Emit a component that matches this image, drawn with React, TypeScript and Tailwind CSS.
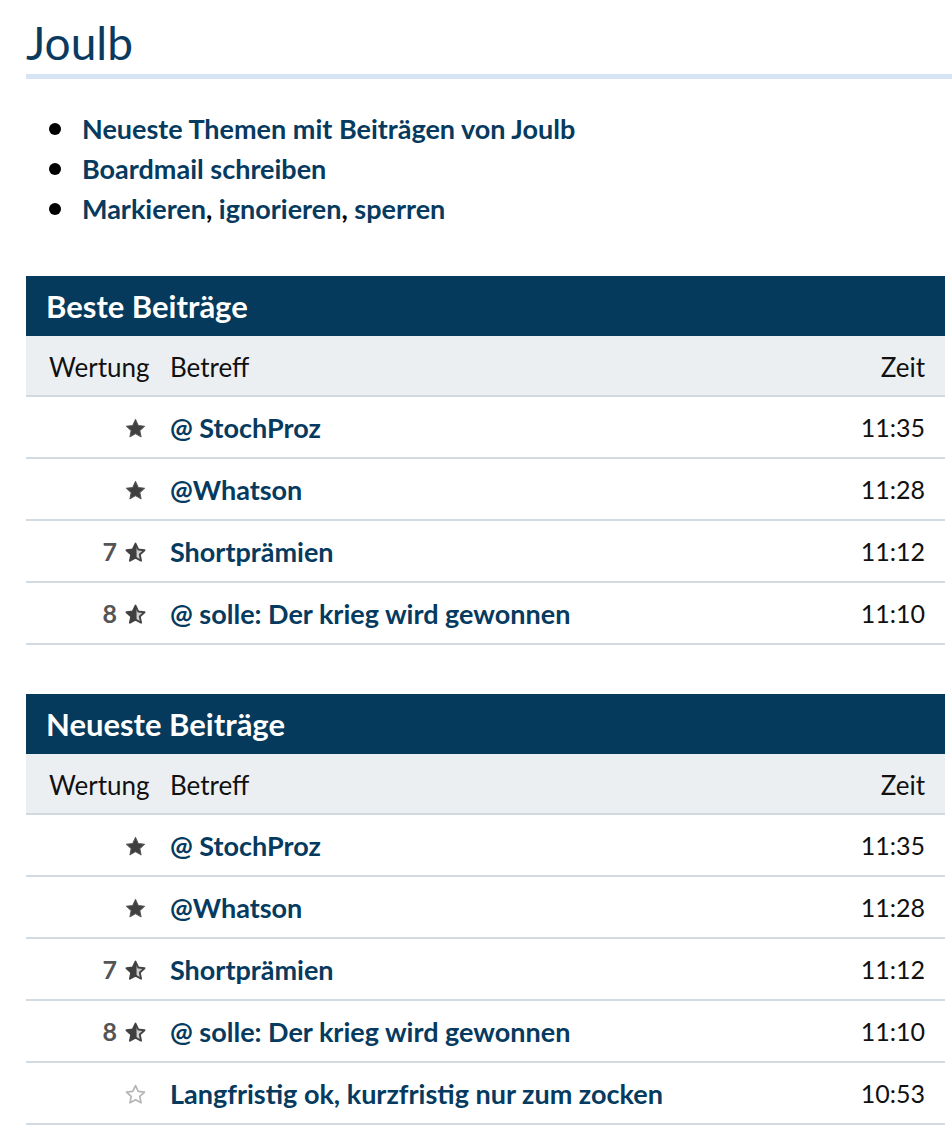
import React from 'react';

type Post = { score?: number; stars: 'full' | 'half' | 'empty'; title: string; time: string };

const best: Post[] = [
  { stars: 'full', title: '@ StochProz', time: '11:35' },
  { stars: 'full', title: '@Whatson', time: '11:28' },
  { score: 7, stars: 'half', title: 'Shortprämien', time: '11:12' },
  { score: 8, stars: 'half', title: '@ solle: Der krieg wird gewonnen', time: '11:10' },
];

const newest: Post[] = [
  ...best,
  { stars: 'empty', title: 'Langfristig ok, kurzfristig nur zum zocken', time: '10:53' },
];

const STAR = 'M10 1.5l2.6 5.6 6 .7-4.5 4.1 1.2 6L10 14.9l-5.3 3 1.2-6L1.4 7.8l6-.7z';

function Star({ kind }: { kind: Post['stars'] }) {
  return (
    <svg width="21" height="21" viewBox="0 0 20 20" className="shrink-0">
      <defs>
        <clipPath id="lefthalf">
          <rect x="0" y="0" width="11" height="20" />
        </clipPath>
      </defs>
      {kind === 'full' && <path d={STAR} fill="#3f3f3f" stroke="#555" strokeWidth="1" strokeLinejoin="round" />}
      {kind === 'half' && (
        <>
          <path d={STAR} fill="#cfcfcf" stroke="#444" strokeWidth="1.8" strokeLinejoin="round" />
          <path d={STAR} fill="#3f3f3f" clipPath="url(#lefthalf)" />
        </>
      )}
      {kind === 'empty' && <path d={STAR} fill="#fff" stroke="#b5b5b5" strokeWidth="1.6" strokeLinejoin="round" />}
    </svg>
  );
}

function PostTable({ title, posts }: { title: string; posts: Post[] }) {
  return (
    <section className="mr-[7px]">
      <h2 className="bg-[#053a5c] text-white font-bold text-[31px] h-[60px] flex items-center pl-[20px] pt-[1px]">{title}</h2>
      <div className="flex items-center h-[61px] pt-[3px] bg-[#eceff2] border-b-2 border-[#d0d9e0] text-[26px] text-[#111]">
        <div className="w-[144px] pl-[23px] shrink-0">Wertung</div>
        <div className="flex-1">Betreff</div>
        <div className="pr-[20px]">Zeit</div>
      </div>
      {posts.map((p, i) => (
        <div key={i} className="flex items-center h-[62px] pt-[2px] border-b-2 border-[#d3dbe2] text-[27px]">
          <div className="w-[144px] shrink-0 flex items-center justify-end gap-[8px] pr-[24px]">
            {p.score !== undefined && <span className="font-bold text-[25px] text-[#555]">{p.score}</span>}
            <Star kind={p.stars} />
          </div>
          <a className="flex-1 font-bold text-[#063a5e]">{p.title}</a>
          <div className="pr-[20px] text-[25px] text-[#111]">{p.time}</div>
        </div>
      ))}
    </section>
  );
}

const links = [
  <>Neueste Themen mit Beiträgen von Joulb</>,
  <>Boardmail schreiben</>,
  <>
    Markieren<span className="text-black">,</span> ignorieren<span className="text-black">,</span> sperren
  </>,
];

export default function App() {
  return (
    <div className="bg-white min-h-[1140px] pl-[26px] pt-[16px] text-[#111]" style={{ fontFamily: 'Lato, "Open Sans", sans-serif' }}>
      <h1 className="text-[46px] text-[#0b3a5e] leading-[54px] pb-[4px] border-b-[5px] border-[#d6e4f5]">Joulb</h1>
      <ul className="mt-[30px] text-[27px] leading-[40px] font-bold text-[#063a5e]">
        {links.map((l, i) => (
          <li key={i} className="flex items-center">
            <span className="ml-[23px] mr-[21px] w-[12px] h-[12px] rounded-full bg-black shrink-0" />
            <span>{l}</span>
          </li>
        ))}
      </ul>
      <div className="mt-[47px] flex flex-col gap-[49px]">
        <PostTable title="Beste Beiträge" posts={best} />
        <PostTable title="Neueste Beiträge" posts={newest} />
      </div>
    </div>
  );
}
